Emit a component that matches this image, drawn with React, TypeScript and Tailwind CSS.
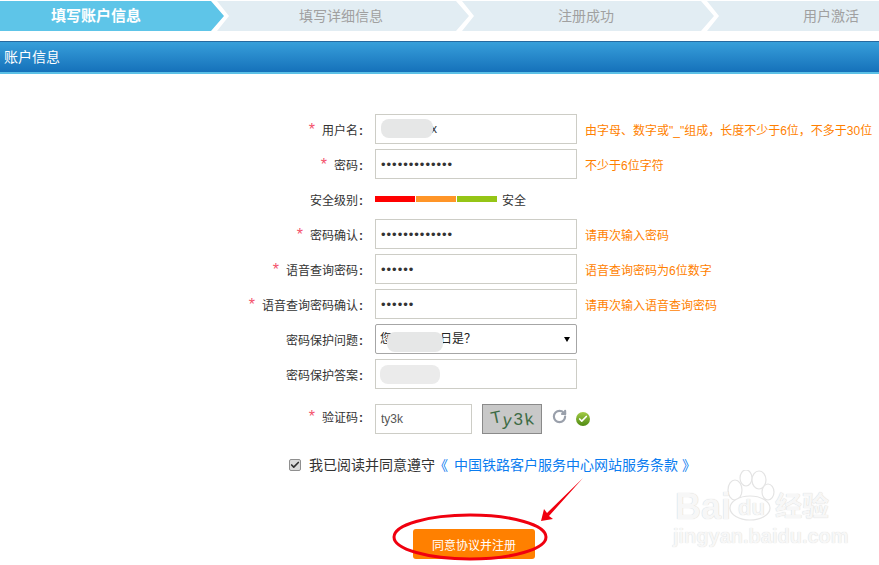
import { Check, RotateCw } from 'lucide-react'

const steps = ['填写账户信息', '填写详细信息', '注册成功', '用户激活']

const inputClass = 'w-[202px] h-[30px] border border-[#cdcdc6] bg-white pl-[5px] text-[12px] text-[#333] outline-none'
const passwordClass = 'w-[202px] h-[30px] border border-[#cdcdc6] bg-white pl-[5px] text-[13px] tracking-[1px] text-[#333] outline-none'

const Label = ({ text, required, className }: { text: string; required?: boolean; className: string }) => (
    <div className={`w-[363px] flex justify-end items-center text-[12px] text-[#333] ${className}`}>
        {required && <span className="text-[#f4536b] text-[16px] leading-none mr-[7px] mt-[-2px]">*</span>}
        <span>{text}</span>
        <span className="w-[5px] text-right font-bold">:</span>
    </div>
)

const Row = ({ label, required, hint, children }: { label: string; required?: boolean; hint?: string; children: React.ReactNode }) => (
    <div className="h-[35px] flex items-start">
        <div className="h-[30px] flex items-center"><Label text={label} required={required} className="pt-[4px]" /></div>
        <div className="relative ml-[12px] w-[202px] h-[30px] flex items-center">{children}</div>
        {hint && <div className="ml-[8px] h-[30px] pt-[4px] flex items-center text-[12px] text-[#ff7f00] whitespace-nowrap">{hint}</div>}
    </div>
)

const Blob = ({ className }: { className: string }) => (
    <div className={`absolute rounded-[8px] bg-[#e6e7e7] ${className}`} />
)

const Watermark = () => (
    <div className="absolute left-[673px] top-[470px] w-[165px] h-[78px] pointer-events-none select-none">
        <svg className="absolute left-0 top-0" width="165" height="60" viewBox="0 0 165 60">
            <g fill="#fff" stroke="#e4e4e4" strokeWidth="1.2">
                <ellipse cx="62" cy="20" rx="7" ry="10" />
                <ellipse cx="73" cy="8" rx="6" ry="8" />
                <ellipse cx="86" cy="10" rx="7" ry="9" />
                <ellipse cx="95" cy="22" rx="6" ry="8" />
                <ellipse cx="77" cy="38" rx="20" ry="12" />
            </g>
        </svg>
        <span className="absolute left-[2px] top-[15px] text-[36px] font-bold leading-[44px] text-[#f7f7f7] [text-shadow:0_0_1px_#c8c8c8] font-['Liberation_Sans']">Bai</span>
        <span className="absolute left-[65px] top-[25px] text-[22px] font-bold leading-[26px] text-[#f7f7f7] [text-shadow:0_0_1px_#c8c8c8] font-['Liberation_Sans']">du</span>
        <span className="absolute left-[102px] top-[20px] text-[27px] font-bold leading-[34px] whitespace-nowrap text-[#f7f7f7] [text-shadow:0_0_1px_#c8c8c8]">经验</span>
        <span className="absolute left-0 top-[53px] text-[20px] font-bold leading-[26px] whitespace-nowrap text-[#f7f7f7] [text-shadow:0_0_1px_#d0d0d0] font-['Liberation_Sans']">jingyan.baidu.com</span>
    </div>
)

const App = () => {
    return (
        <div className="relative w-[879px] h-[565px] overflow-hidden bg-white font-['Liberation_Sans','Noto_Sans_CJK_SC',sans-serif]">
            <div className="flex h-[30px] ml-[-28px] pt-[1px] box-content">
                {steps.map((step, i) => (
                    <div
                        key={step}
                        className={`shrink-0 w-[252px] h-[30px] mr-[-7px] pr-[4px] flex items-center justify-center [clip-path:polygon(0_0,239px_0,252px_50%,239px_100%,0_100%,12px_50%)] ${i === 0 ? 'bg-[#5ec5e8] text-white font-bold text-[15px]' : 'bg-[#e2edf3] text-[#a0a0a0] text-[14px]'}`}
                    >
                        {step}
                    </div>
                ))}
            </div>

            <div className="mt-[10px] h-[33px] border-t border-[#26699f] border-b-2 border-b-[#5bc0e6] bg-gradient-to-b from-[#379fda] to-[#1571ba] flex items-center pl-[4px] text-[14px] text-white">
                账户信息
            </div>

            <div className="pt-[40px]">
                <Row label="用户名" required hint={'由字母、数字或"_"组成\uFF0C长度不少于6位\uFF0C不多于30位'}>
                    <input className="w-[202px] h-[30px] border border-[#cdcdc6] bg-white pl-[7px] text-[12px] text-[#333] outline-none" value="cxxxxxxxx" readOnly />
                    <Blob className="left-[6px] top-[5px] w-[52px] h-[19px]" />
                </Row>
                <Row label="密码" required hint="不少于6位字符">
                    <input className={passwordClass} type="password" value="1234567890123" readOnly />
                </Row>
                <Row label="安全级别">
                    <div className="flex items-center gap-[1px] h-[6px]">
                        <div className="w-[40px] h-[6px] bg-[#ff0000]" />
                        <div className="w-[40px] h-[6px] bg-[#ff9528]" />
                        <div className="w-[40px] h-[6px] bg-[#95c516]" />
                        <span className="ml-[4px] pt-[3px] text-[12px] text-[#333] whitespace-nowrap">安全</span>
                    </div>
                </Row>
                <Row label="密码确认" required hint="请再次输入密码">
                    <input className={passwordClass} type="password" value="1234567890123" readOnly />
                </Row>
                <Row label="语音查询密码" required hint="语音查询密码为6位数字">
                    <input className={passwordClass} type="password" value="123456" readOnly />
                </Row>
                <Row label="语音查询密码确认" required hint="请再次输入语音查询密码">
                    <input className={passwordClass} type="password" value="123456" readOnly />
                </Row>
                <Row label="密码保护问题">
                    <select className="w-[202px] h-[30px] appearance-none border border-[#a6a6a6] rounded-[2px] bg-white pl-[4px] text-[12px] text-[#222] outline-none" defaultValue="q">
                        <option value="q">{'您母亲的生日是\uFF1F'}</option>
                    </select>
                    <div className="absolute right-[7px] top-[13px] w-0 h-0 border-x-[3px] border-x-transparent border-t-[5px] border-t-black" />
                    <Blob className="left-[12px] top-[8px] w-[56px] h-[20px] bg-[#e0e0e0]" />
                </Row>
                <Row label="密码保护答案">
                    <input className={inputClass} value="" readOnly />
                    <Blob className="left-[5px] top-[6px] w-[60px] h-[19px] bg-[#ebebeb]" />
                </Row>

                <div className="mt-[10px] h-[30px] flex items-center">
                    <Label text="验证码" required className="mb-[2px]" />
                    <input className="ml-[12px] w-[97px] h-[30px] border border-[#cdcdc6] bg-white pl-[5px] text-[12px] text-[#555] outline-none" value="ty3k" readOnly />
                    <div className="ml-[10px] w-[60px] h-[30px] border border-[#8a8a8a] bg-[#c8c8c8] flex items-center justify-center gap-[2px] text-[#3d6b45] text-[17px] leading-none font-['Liberation_Sans']">
                        <span className="rotate-[-12deg] mt-[-3px]">T</span>
                        <span className="rotate-[8deg] mt-[3px]">y</span>
                        <span>3</span>
                        <span className="rotate-[-8deg]">k</span>
                    </div>
                    <RotateCw className="ml-[10px] mt-[-6px] text-[#9aa0ab]" size={15} strokeWidth={3.5} />
                    <div className="ml-[9px] w-[14px] h-[14px] rounded-full bg-gradient-to-b from-[#a3cc45] to-[#4f8a10] flex items-center justify-center">
                        <Check className="text-white" size={10} strokeWidth={4} />
                    </div>
                </div>

                <div className="mt-[25px] h-[12px] pl-[289px] flex items-center text-[14px] text-[#333] whitespace-nowrap">
                    <span className="w-[12px] h-[12px] border border-[#8f8f8f] rounded-[2px] bg-[#dcdcdc] flex items-center justify-center">
                        <Check className="text-[#333]" size={10} strokeWidth={4} />
                    </span>
                    <span className="ml-[8px]">我已阅读并同意遵守</span>
                    <a className="ml-[5px] text-[#0a7cf0]">
                        <span className="inline-block translate-x-[-6px]">《</span>中国铁路客户服务中心网站服务条款<span className="inline-block translate-x-[4px]">》</span>
                    </a>
                </div>

                <div className="mt-[58px] pl-[413px]">
                    <button className="w-[122px] h-[30px] pt-[4px] rounded-[3px] bg-[#ff8000] text-[12px] text-white">同意协议并注册</button>
                </div>
            </div>

            <svg className="absolute left-0 top-0 pointer-events-none" width="879" height="565" viewBox="0 0 879 565">
                <ellipse cx="470" cy="537" rx="76" ry="22" fill="none" stroke="#f0000f" strokeWidth="3" />
                <polygon points="583,478 549,516 553,519 541,521 544,509 547,513" fill="#f0000f" />
            </svg>

            <Watermark />
        </div>
    )
}

export default App
